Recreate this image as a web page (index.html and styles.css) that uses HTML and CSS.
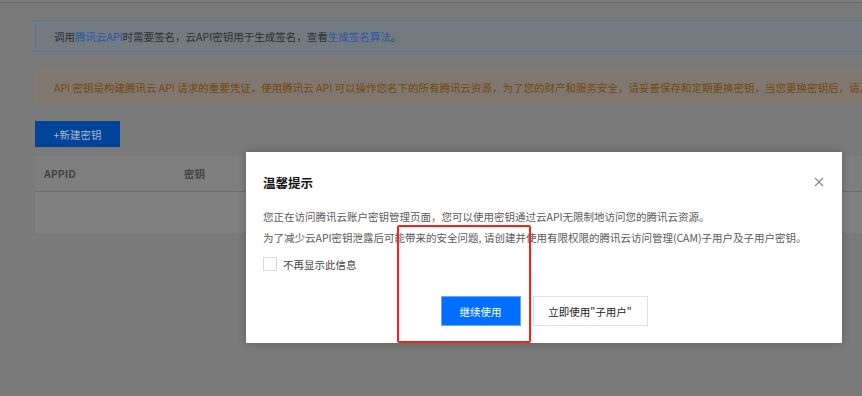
FILE: index.html
```html
<!DOCTYPE html>
<html lang="zh-CN">
<head>
    <meta charset="UTF-8">
    <meta name="viewport" content="width=device-width, initial-scale=1.0">
    <title>API密钥管理</title>
    <link rel="stylesheet" href="styles.css">
</head>
<body>
<div class="topbar"></div>
<div class="page">
    <div class="notice notice-info">
        调用<a href="#">腾讯云API</a>时需要签名，云API密钥用于生成签名，查看<a href="#">生成签名算法</a>。
    </div>
    <div class="notice notice-warn">
        API 密钥是构建腾讯云 API 请求的重要凭证，使用腾讯云 API 可以操作您名下的所有腾讯云资源，为了您的财产和服务安全，请妥善保存和定期更换密钥，当您更换密钥后，请及时删除旧密钥。
    </div>
    <button type="button" class="btn-create">+新建密钥</button>
    <div class="table">
        <div class="table-head">
            <div class="col-appid">APPID</div>
            <div class="col-key">密钥</div>
        </div>
        <div class="table-body"></div>
    </div>
</div>

<!-- dialog -->
<div class="dialog">
    <div class="dialog-head">
        <h3>温馨提示</h3>
        <button type="button" class="dialog-close" aria-label="关闭">
            <svg width="10" height="10" viewBox="0 0 10 10"><path d="M1 1L9 9M9 1L1 9" stroke="#8c8c8c" stroke-width="1.3"/></svg>
        </button>
    </div>
    <div class="dialog-body">
        <p>您正在访问腾讯云账户密钥管理页面，您可以使用密钥通过云API无限制地访问您的腾讯云资源。</p>
        <p>为了减少云API密钥泄露后可能带来的安全问题, 请创建并使用有限权限的腾讯云访问管理(CAM)子用户及子用户密钥。</p>
    </div>
    <label class="check">
        <input type="checkbox">
        <span class="check-box"></span>
        不再显示此信息
    </label>
    <div class="dialog-foot">
        <button type="button" class="btn btn-primary">继续使用</button>
        <button type="button" class="btn btn-default">立即使用"子用户"</button>
    </div>
</div>

<div class="mark"></div>
</body>
</html>
```

FILE: styles.css
```css
body {
    margin: 0;
    background: #7a7a7a;
    font-family: "Noto Sans CJK SC", "Noto Sans", sans-serif;
    font-size: 10.5px;
    overflow: hidden;
}
.topbar {
    height: 2px;
    background: #7d7d7d;
    border-bottom: 1px solid #6a6a6a;
}
.page {
    padding: 17px 0 0 35px;
    width: 960px;
}
.notice {
    height: 32px;
    box-sizing: border-box;
    display: flex;
    align-items: center;
    padding-left: 18px;
    white-space: nowrap;
    overflow: hidden;
}
.notice-info {
    background: #737a80;
    border: 1px solid #56789f;
    color: #2b2f36;
}
.notice-info a {
    color: #2a58a8;
    text-decoration: none;
}
.notice-warn {
    margin-top: 19px;
    background: #807870;
    border: 1px solid #8c7a5e;
    color: #74480f;
}
.btn-create {
    display: block;
    margin-top: 18px;
    width: 85px;
    height: 26px;
    border: none;
    background: #00449a;
    color: #a9b6cb;
    font-family: inherit;
    font-size: 10.5px;
    padding: 0;
}
.table {
    margin-top: 9px;
}
.table-head {
    height: 35px;
    display: flex;
    align-items: center;
    background: #7e7e7e;
    border-bottom: 1px solid #6c6c6c;
    color: #444;
    font-weight: bold;
}
.col-appid {
    width: 140px;
    padding-left: 9px;
}
.table-body {
    height: 41px;
    background: #808080;
}
.dialog {
    position: absolute;
    left: 246px;
    top: 152px;
    width: 596px;
    height: 191px;
    box-sizing: border-box;
    padding: 20px 17px 0;
    background: #fff;
    box-shadow: 0 0 8px rgba(0,0,0,0.25);
}
.dialog-head {
    height: 20px;
    display: flex;
    align-items: center;
    justify-content: space-between;
}
.dialog-head h3 {
    margin: 0;
    font-size: 12.5px;
    color: #111;
    font-weight: bold;
}
.dialog-close {
    border: none;
    background: none;
    padding: 0;
    margin-right: 1px;
    width: 10px;
    height: 10px;
    line-height: 0;
}
.dialog-body {
    margin-top: 14px;
    color: #5a5a5a;
}
.dialog-body p {
    margin: 0;
    line-height: 21px;
}
.check {
    margin-top: 9px;
    height: 14px;
    display: flex;
    align-items: center;
    color: #444;
}
.check input {
    display: none;
}
.check-box {
    width: 12px;
    height: 12px;
    border: 1px solid #d9d9d9;
    margin-right: 6px;
}
.dialog-foot {
    margin-top: 25px;
    display: flex;
    justify-content: center;
    gap: 12px;
}
.btn {
    height: 30px;
    box-sizing: border-box;
    font-family: inherit;
    font-size: 10.5px;
    padding: 0;
}
.btn-primary {
    width: 80px;
    background: #006eff;
    border: 1px solid #6aa8ff;
    color: #fff;
}
.btn-default {
    width: 115px;
    background: #fff;
    border: 1px solid #e2e2e2;
    color: #222;
}
.mark {
    position: absolute;
    left: 397px;
    top: 225px;
    width: 134px;
    height: 118px;
    box-sizing: border-box;
    border: 2px solid #f5221b;
    border-radius: 2px;
}
```
